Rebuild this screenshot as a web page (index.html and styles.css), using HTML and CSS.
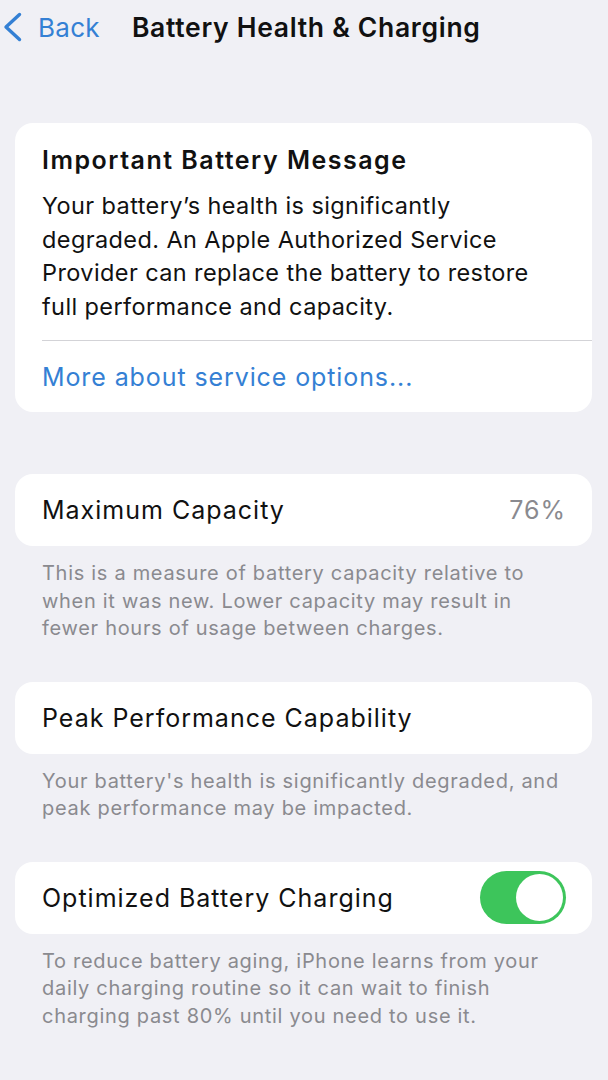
FILE: index.html
```html
<!DOCTYPE html>
<html lang="en">

<head>
    <meta charset="UTF-8">
    <meta name="viewport" content="width=device-width, initial-scale=1.0">
    <title>Battery Health &amp; Charging</title>
    <link rel="stylesheet" href="styles.css">
</head>

<body>
    <header class="nav">
        <a class="back" href="#">
            <svg class="chevron" width="20" height="30" viewBox="0 0 20 30">
                <path d="M16.5 2.5 L3 15 L16.5 27.5" fill="none" stroke="currentColor" stroke-width="3.4"
                    stroke-linecap="round" stroke-linejoin="round" />
            </svg>
            <span>Back</span>
        </a>
        <h1 class="title">Battery Health &amp; Charging</h1>
    </header>

    <main class="content">
        <section class="card message-card">
            <h2 class="message-title">Important Battery Message</h2>
            <p class="message-text">Your battery’s health is significantly degraded. An Apple Authorized Service
                Provider can replace the battery to restore full performance and capacity.</p>
            <div class="divider"></div>
            <a class="service-link" href="#">More about service options...</a>
        </section>

        <section class="group">
            <div class="card row">
                <span class="row-label">Maximum Capacity</span>
                <span class="row-value">76%</span>
            </div>
            <p class="footnote">This is a measure of battery capacity relative to when it was new. Lower capacity
                may result in fewer hours of usage between charges.</p>
        </section>

        <section class="group">
            <div class="card row">
                <span class="row-label">Peak Performance Capability</span>
            </div>
            <p class="footnote">Your battery's health is significantly degraded, and peak performance may be
                impacted.</p>
        </section>

        <section class="group">
            <div class="card row">
                <span class="row-label">Optimized Battery Charging</span>
                <span class="toggle on"><span class="knob"></span></span>
            </div>
            <p class="footnote">To reduce battery aging, iPhone learns from your daily charging routine so it can
                wait to finish charging past 80% until you need to use it.</p>
        </section>
    </main>
</body>

</html>
```

FILE: styles.css
```css
:root {
    --bg-color: #f0f0f5;
    --card-color: #ffffff;
    --text-color: #111111;
    --muted-color: #8a8a8f;
    --link-color: #3480d4;
    --green: #3dc55b;
    --divider: #d3d3d7;
}

body {
    margin: 0;
    background-color: var(--bg-color);
    color: var(--text-color);
    font-family: 'Inter', 'Noto Sans', sans-serif;
}

.nav {
    display: flex;
    align-items: center;
    height: 54px;
    padding: 0 0 0 3px;
}

.back {
    display: flex;
    align-items: center;
    gap: 15px;
    color: var(--link-color);
    text-decoration: none;
    font-size: 26px;
    letter-spacing: 0.3px;
}

.chevron {
    display: block;
}

.title {
    margin: 0 0 0 32px;
    font-size: 26.5px;
    font-weight: 600;
    letter-spacing: 0.7px;
}

.content {
    padding: 69px 16px 0 15px;
}

.card {
    background-color: var(--card-color);
    border-radius: 18px;
}

.message-card {
    padding: 20px 0 18px 27px;
}

.message-title {
    margin: 0;
    font-size: 25px;
    line-height: 34px;
    font-weight: 600;
    letter-spacing: 1.5px;
}

.message-text {
    margin: 12px 40px 17px 0;
    font-size: 23.5px;
    line-height: 33.5px;
    letter-spacing: 0.4px;
}

.divider {
    height: 1px;
    background-color: var(--divider);
}

.service-link {
    display: block;
    margin-top: 19px;
    color: var(--link-color);
    text-decoration: none;
    font-size: 25px;
    line-height: 34px;
    letter-spacing: 0.9px;
}

.group {
    margin-top: 62px;
}

.group+.group {
    margin-top: 39px;
}

.row {
    display: flex;
    align-items: center;
    justify-content: space-between;
    height: 72px;
    padding: 0 26px 0 27px;
}

.row-label {
    font-size: 25px;
    letter-spacing: 1px;
}

.row-value {
    font-size: 25px;
    letter-spacing: 1px;
    color: var(--muted-color);
}

.toggle {
    display: flex;
    align-items: center;
    justify-content: flex-end;
    width: 86px;
    height: 53px;
    padding: 0 3px;
    box-sizing: border-box;
    border-radius: 27px;
    background-color: var(--green);
}

.knob {
    width: 47px;
    height: 47px;
    border-radius: 50%;
    background-color: white;
}

.footnote {
    margin: 14px 25px 0 27px;
    font-size: 20px;
    line-height: 27.5px;
    letter-spacing: 0.7px;
    color: var(--muted-color);
}
```
